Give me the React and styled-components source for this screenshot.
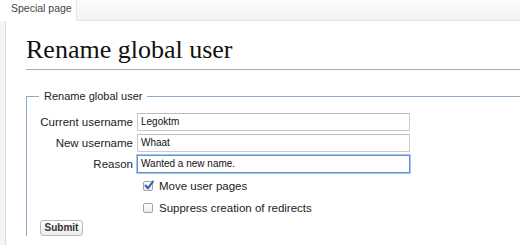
import React from "react";
import styled, { createGlobalStyle } from "styled-components";

const GlobalStyle = createGlobalStyle`
  html, body {
    margin: 0;
    padding: 0;
    background: #ffffff;
  }
  body {
    font-family: "Liberation Sans", Arial, sans-serif;
    color: #222;
  }
`;

const Page = styled.div`
  width: 520px;
  height: 245px;
  overflow: hidden;
  display: flex;
  flex-direction: column;
`;

const TopBar = styled.div`
  height: 21px;
  display: flex;
`;

const Tab = styled.div`
  width: 77px;
  height: 21px;
  box-sizing: border-box;
  background: #ffffff;
  border-right: 1px solid #e2e8ec;
  padding: 2px 0 0 11px;
  font-size: 10.5px;
  color: #444;
`;

const TabFiller = styled.div`
  flex: 1;
  height: 20px;
  background: linear-gradient(#fcfcfc, #f2f3f4);
  border-bottom: 1px solid #d8e6ed;
`;

const Body = styled.div`
  flex: 1;
  display: flex;
`;

const LeftStrip = styled.div`
  width: 5px;
  background: #f4f5f6;
`;

const Content = styled.div`
  flex: 1;
  min-width: 0;
  overflow: hidden;
  background: #fff;
  border-left: 1px solid #cfe3ee;
  padding-left: 20px;
`;

const Heading = styled.h1`
  margin: 13px 0 0 0;
  padding-bottom: 4px;
  font-family: "Liberation Serif", "Times New Roman", serif;
  font-weight: normal;
  font-size: 26px;
  line-height: 1.2;
  color: #111;
  border-bottom: 1px solid #aaa;
`;

const Fieldset = styled.fieldset`
  margin: 19px -20px 0 0;
  padding: 4px 0 0 12px;
  border: 1px solid #8ea9c9;
  border-right: none;
  border-bottom: none;
  min-width: 0;
`;

const Legend = styled.legend`
  padding: 0 5px;
  margin-left: 0;
  font-size: 11px;
  line-height: 14px;
  color: #222;
`;

const Form = styled.div`
  display: grid;
  grid-template-columns: 94px 273px;
  column-gap: 4px;
  row-gap: 3px;
  align-items: center;
  margin-top: 6px;
`;

const Label = styled.label`
  text-align: right;
  font-size: 11.5px;
  color: #222;
  white-space: nowrap;
`;

const Input = styled.div`
  height: 18px;
  box-sizing: border-box;
  border: 1px solid ${(p) => (p.$focus ? "#5f93d6" : "#cccccc")};
  border-top-color: ${(p) => (p.$focus ? "#5f93d6" : "#bdbdbd")};
  box-shadow: ${(p) => (p.$focus ? "0 0 0 1px #a9c6ec" : "none")};
  background: #fff;
  padding: 0 3px;
  font-size: 10px;
  line-height: 16px;
  color: #111;
`;

const CheckRow = styled.div`
  grid-column: 2;
  height: 19px;
  display: flex;
  align-items: center;
  gap: 6px;
  padding-left: 6px;
  font-size: 11.5px;
  color: #222;
`;

const Box = styled.span`
  width: 10px;
  height: 10px;
  box-sizing: border-box;
  border: 1px solid #a3a3a3;
  border-radius: 2px;
  background: linear-gradient(#ffffff, #ececec);
  position: relative;
  flex-shrink: 0;
`;

const Check = styled.svg`
  position: absolute;
  left: -1px;
  top: -3px;
`;

const Submit = styled.button`
  margin: 3px 0 0 1px;
  width: 43px;
  height: 16px;
  box-sizing: border-box;
  padding: 0;
  border: 1px solid #b8b8b8;
  border-radius: 3px;
  background: linear-gradient(#ffffff, #ececec);
  font-family: "Liberation Sans", Arial, sans-serif;
  font-size: 10px;
  font-weight: bold;
  line-height: 14px;
  color: #333;
`;

function CheckBox({ checked }) {
  return (
    <Box>
      {checked && (
        <Check width="12" height="12" viewBox="0 0 12 12">
          <path
            d="M2.5 6.5 L5 9.2 L10 2.5"
            fill="none"
            stroke="#2d5fb8"
            strokeWidth="2"
            strokeLinecap="round"
            strokeLinejoin="round"
          />
        </Check>
      )}
    </Box>
  );
}

export default function App() {
  return (
    <Page>
      <GlobalStyle />
      <TopBar>
        <Tab>Special page</Tab>
        <TabFiller />
      </TopBar>
      <Body>
        <LeftStrip />
        <Content>
          <Heading>Rename global user</Heading>
          <Fieldset>
            <Legend>Rename global user</Legend>
            <Form>
              <Label>Current username</Label>
              <Input>Legoktm</Input>
              <Label>New username</Label>
              <Input>Whaat</Input>
              <Label>Reason</Label>
              <Input $focus>Wanted a new name.</Input>
              <CheckRow>
                <CheckBox checked />
                Move user pages
              </CheckRow>
              <CheckRow>
                <CheckBox />
                Suppress creation of redirects
              </CheckRow>
            </Form>
            <Submit>Submit</Submit>
          </Fieldset>
        </Content>
      </Body>
    </Page>
  );
}
